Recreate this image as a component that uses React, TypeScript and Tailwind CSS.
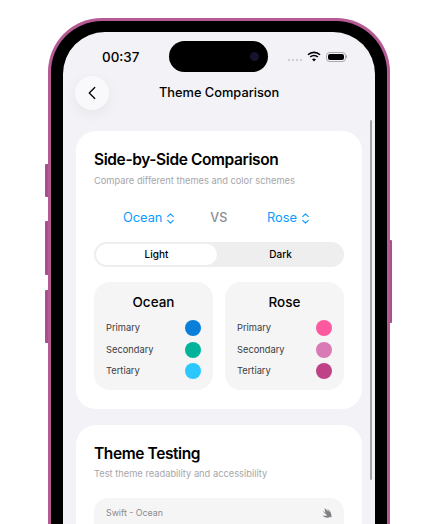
import { ChevronLeft } from 'lucide-react'

const themes = [
  { name: 'Ocean', colors: ['bg-[#0a7fd9]', 'bg-[#00b39b]', 'bg-[#2ac8ff]'] },
  { name: 'Rose', colors: ['bg-[#fb5b9e]', 'bg-[#d979b5]', 'bg-[#bf4287]'] },
]

const roles = ['Primary', 'Secondary', 'Tertiary']

function StatusBar() {
  return (
    <div className="relative flex h-[43px] items-start justify-between pl-[39px] pr-[28px] pt-[16px] text-black">
      <span className="text-[13.4px] font-medium leading-[18px]">00:37</span>
      {/* dynamic island */}
      <div className="absolute left-[106px] top-[9px] flex h-[31px] w-[99px] items-center justify-end rounded-full bg-black pr-[9px]">
        <div className="h-[9px] w-[9px] rounded-full bg-[#14142c]" />
      </div>
      <div className="flex items-center gap-[5px] pt-[3px]">
        <div className="mt-[7px] flex gap-[1.5px]">
          <span className="h-[2.5px] w-[2.5px] rounded-full bg-[#c4c4c8]" />
          <span className="h-[2.5px] w-[2.5px] rounded-full bg-[#c4c4c8]" />
          <span className="h-[2.5px] w-[2.5px] rounded-full bg-[#c4c4c8]" />
          <span className="h-[2.5px] w-[2.5px] rounded-full bg-[#c4c4c8]" />
        </div>
        <svg width="14" height="11" viewBox="0 0 14 11" fill="none" stroke="black" strokeWidth="1.6">
          <path d="M1 3.8a8.6 8.6 0 0 1 12 0" />
          <path d="M3.2 6a5.4 5.4 0 0 1 7.6 0" />
          <path d="M7 10.6 5 8.3a3 3 0 0 1 4 0z" fill="black" stroke="none" />
        </svg>
        <div className="flex items-center">
          <div className="flex h-[10px] w-[20px] items-center rounded-[3.5px] border border-[#a8a8ac] p-[1px]">
            <div className="h-full w-full rounded-[2px] bg-black" />
          </div>
          <div className="h-[3px] w-[1px] rounded-r-full bg-[#a8a8ac]" />
        </div>
      </div>
    </div>
  )
}

function ThemeCard({ name, colors }: { name: string; colors: string[] }) {
  return (
    <div className="h-[108px] w-[119px] rounded-[16px] bg-[#f5f5f6] px-[12px] pt-[12px]">
      <div className="text-center text-[13.5px] font-medium leading-[17px] text-black">{name}</div>
      <div className="mt-[9px] flex flex-col gap-[5.5px]">
        {roles.map((role, i) => (
          <div key={role} className="flex h-[16px] items-center justify-between">
            <span className="text-[9.3px] leading-[12px] text-[#3c3c40]">{role}</span>
            <span className={`h-[16px] w-[16px] rounded-full ${colors[i]}`} />
          </div>
        ))}
      </div>
    </div>
  )
}

function Picker({ label }: { label: string }) {
  return (
    <div className="flex items-center gap-[5px] text-[12.8px] leading-[18px] text-[#0a9bff]">
      {label}
      {/* chevron.up.chevron.down */}
      <svg width="7" height="11" viewBox="0 0 7 11" fill="none" stroke="currentColor" strokeWidth="1.1" strokeLinecap="round" strokeLinejoin="round">
        <path d="M0.7 3.6 3.5 0.8 6.3 3.6" />
        <path d="M0.7 7.4 3.5 10.2 6.3 7.4" />
      </svg>
    </div>
  )
}

function SwiftBird() {
  return (
    <svg width="10" height="10" viewBox="0 0 10 10" fill="#808084">
      <path d="M2.6 0.3C4.4 1.6 6 3 7 4.1 6.4 2.9 5.7 1.7 5 0.8 6.9 2 8.4 3.6 9 5.4c0.4 0.9 0.5 2 0.2 2.7 0.3 0.4 0.6 1 0.6 1.5C9.2 8.900 8.500 8.800 7.800 9.100 6.400 9.900 4 9.800 2.300 8.900 1.500 8.400 0.800 7.800 0.200 7 1.800 8 3.700 8.200 5.200 7.300 3.600 6.200 1.900 4.400 0.500 2.500 1.800 3.600 3 4.500 4.100 5.100 3.300 4 2.600 2.700 2.600 0.300z" />
    </svg>
  )
}

export default function App() {
  return (
    <div
      className="relative h-[524px] w-[438px] overflow-hidden bg-white"
      style={{ fontFamily: 'Inter, "Noto Sans", sans-serif' }}
    >
      {/* side buttons */}
      <div className="absolute left-[45px] top-[164px] h-[33px] w-[3px] rounded-l-[1px] bg-[#a8508c]" />
      <div className="absolute left-[45px] top-[221px] h-[54px] w-[3px] rounded-l-[1px] bg-[#a8508c]" />
      <div className="absolute left-[45px] top-[290px] h-[53px] w-[3px] rounded-l-[1px] bg-[#a8508c]" />
      <div className="absolute left-[390px] top-[240px] h-[83px] w-[2px] rounded-r-[1px] bg-[#a8508c]" />

      <div className="ml-[48px] mt-[18px] h-[520px] w-[342px] rounded-t-[54px] border-[3px] border-b-0 border-[#b65a94] bg-black px-[12px] pt-[11px]">
        <div className="relative h-full w-[312px] overflow-hidden rounded-t-[42px] bg-[#f2f2f7]">
          <StatusBar />

          <div className="mt-[1px] flex items-center pl-[12px]">
            <div className="flex h-[34px] w-[34px] items-center justify-center rounded-full bg-[#f9f9fb] shadow-[0_4px_14px_rgba(0,0,0,0.06)]">
              <ChevronLeft size={22} strokeWidth={1.4} className="text-black" />
            </div>
            <div className="ml-[50px] text-[12.8px] font-medium leading-[18px] text-black">Theme Comparison</div>
          </div>

          <div className="absolute right-[3px] top-[88px] h-[360px] w-[2px] rounded-full bg-[#a2a2a6]" />

          <div className="mx-[13px] mt-[21px] flex flex-col gap-[16px]">
            <section className="h-[278px] rounded-[20px] bg-white px-[18px] pt-[18px]">
              <h2 className="text-[15.5px] font-semibold leading-[22px] tracking-[-0.4px] text-black">Side-by-Side Comparison</h2>
              <p className="mt-[4px] text-[9.3px] leading-[12px] text-[#a6a6aa]">Compare different themes and color schemes</p>
              <div className="mt-[22px] flex items-center justify-between pl-[29px] pr-[35px]">
                <Picker label="Ocean" />
                <span className="mr-[4px] text-[12.5px] font-medium leading-[18px] text-[#8c8c90]">VS</span>
                <Picker label="Rose" />
              </div>
              <div className="mt-[15px] flex h-[25px] items-center rounded-full bg-[#eeeeef] p-[2px] text-[10px] font-medium text-black">
                <div className="flex h-[21px] w-[121px] items-center justify-center rounded-full bg-white">Light</div>
                <div className="flex-1 pl-[2px] text-center">Dark</div>
              </div>
              <div className="mt-[15px] flex justify-between">
                {themes.map((t) => (
                  <ThemeCard key={t.name} name={t.name} colors={t.colors} />
                ))}
              </div>
            </section>

            <section className="h-[200px] rounded-[20px] bg-white px-[18px] pt-[18px]">
              <h2 className="text-[15.5px] font-semibold leading-[22px] tracking-[-0.4px] text-black">Theme Testing</h2>
              <p className="mt-[3px] text-[9.3px] leading-[12px] text-[#a6a6aa]">Test theme readability and accessibility</p>
              <div className="mt-[18px] h-[80px] rounded-[14px] bg-[#f5f5f6] px-[12px] pt-[9px]">
                <div className="flex items-center justify-between">
                  <span className="text-[8.8px] leading-[12px] text-[#8a8a8e]">Swift - Ocean</span>
                  <SwiftBird />
                </div>
              </div>
            </section>
          </div>
        </div>
      </div>
    </div>
  )
}
